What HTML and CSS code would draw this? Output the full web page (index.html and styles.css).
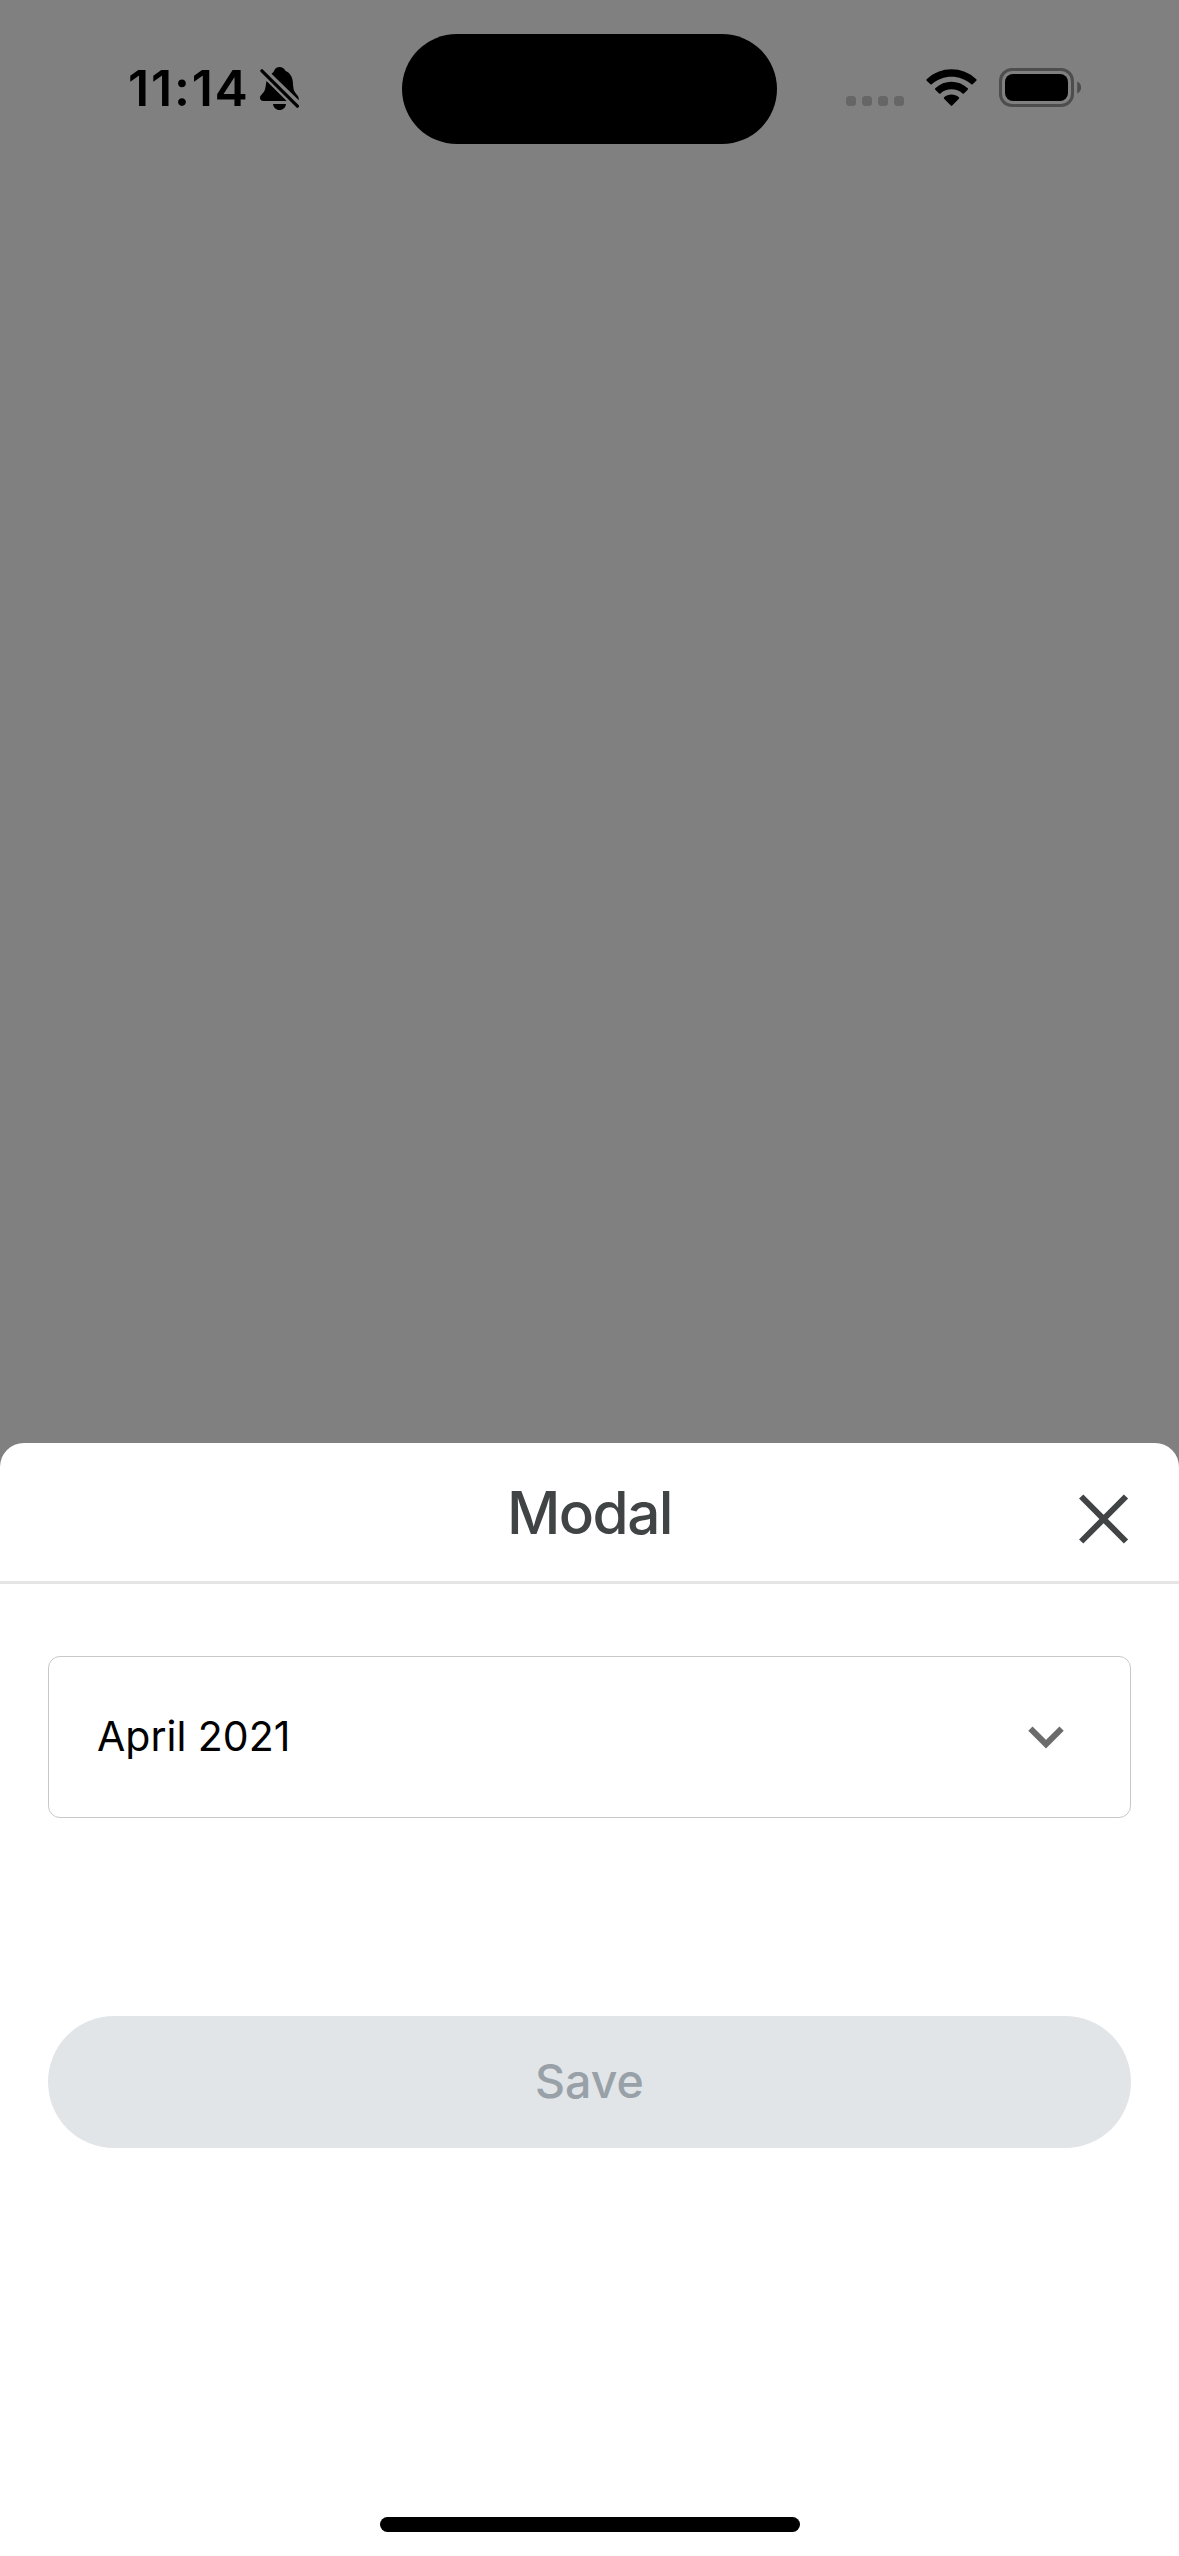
FILE: index.html
```
<!DOCTYPE html>
<html lang="en">
<head>
<meta charset="utf-8">
<title>Modal</title>
<link rel="stylesheet" href="styles.css">
</head>
<body>
<div class="screen">
  <header class="status-bar">
    <div class="status-left">
      <span class="time">11:14</span>
      <svg class="bell" width="40" height="44" viewBox="0 0 40 44" aria-hidden="true">
        <path d="M11.5 6.8C13 5.800 13.600 5 14.200 3.500C15.500 0.800 17.500 0 19.500 0C22 0 24.200 1.200 25.300 3.700C30.500 6 32.700 10.500 32.900 15.500C33.100 20 33.500 23.500 35.500 26C37.500 28.500 39 29.500 38.800 33.300Z"/>
        <path d="M6.500 14.100L26.700 34H3.600C1.500 34 0 33 0 30.800C0 28 3 27 4.600 23.500C5.800 20.500 5.800 17.500 6.500 14.100Z"/>
        <path d="M13 37H26C25.600 40.500 23 43 19.500 43C16 43 13.400 40.500 13 37Z"/>
        <path class="slash" d="M1.900 3.800L37.400 39.200"/>
      </svg>
    </div>
    <div class="island"></div>
    <div class="status-right">
      <div class="signal"><i></i><i></i><i></i><i></i></div>
      <svg class="wifi" width="51" height="38" viewBox="0 0 51 38" aria-hidden="true">
        <path d="M0.700 10.300Q0 11 0.700 11.700L4.400 15.300Q5 15.900 5.700 15.300C17 5.200 34 5.200 45.300 15.300Q46 15.900 46.600 15.300L50.300 11.700Q51 11 50.300 10.300C36.500 -3 14.500 -3 0.700 10.300Z"/>
        <path d="M9.300 19.300Q8.600 20 9.300 20.700L13.100 24.500Q13.700 25.100 14.400 24.500C20.700 18.900 30.300 18.900 36.600 24.500Q37.300 25.100 37.900 24.500L41.700 20.700Q42.400 20 41.700 19.300C32.500 10.700 18.500 10.700 9.300 19.300Z"/>
        <path d="M18.100 28.200Q17.400 29 18.100 29.700L24.800 36.600Q25.500 37.300 26.200 36.600L32.900 29.700Q33.600 29 32.900 28.200C28.700 24.600 22.300 24.600 18.100 28.200Z"/>
      </svg>
      <div class="battery">
        <div class="battery-body"><div class="battery-level"></div></div>
        <svg width="5" height="13" viewBox="0 0 5 13" aria-hidden="true"><path d="M0.200 0.500C5.400 2.300 5.400 10.700 0.200 12.500Z"/></svg>
      </div>
    </div>
  </header>
  <main class="sheet">
    <div class="sheet-header">
      <h1 class="sheet-title">Modal</h1>
      <button class="close" aria-label="Close">
        <svg width="50" height="50" viewBox="0 0 50 50"><path d="M2.200 2.500L47 47.500M47 2.500L2.200 47.500"/></svg>
      </button>
    </div>
    <div class="sheet-body">
      <div class="select">
        <span class="select-value">April 2021</span>
        <svg width="36" height="23" viewBox="0 0 36 23" aria-hidden="true"><path d="M2.400 2.600L18 18.200L33.600 2.600"/></svg>
      </div>
      <button class="save" disabled><span class="save-label">Save</span></button>
    </div>
    <div class="home-indicator"></div>
  </main>
</div>
</body>
</html>
```
FILE: styles.css
```
* {
  box-sizing: border-box;
}

body {
  margin: 0;
  font-family: Inter, "Liberation Sans", sans-serif;
}

button {
  padding: 0;
  border: 0;
  background: none;
  font: inherit;
}

svg {
  display: block;
  flex: none;
}

.screen {
  display: flex;
  flex-direction: column;
  width: 1179px;
  height: 2556px;
  overflow: hidden;
  background: #808080;
}

.status-bar {
  display: grid;
  grid-template-columns: 402px 375px 1fr;
  align-items: start;
  height: 1443px;
  flex: none;
}

.status-left {
  display: flex;
  align-items: flex-start;
  padding: 67px 0 0 128px;
}

.time {
  width: 132px;
  margin-top: -9px;
  font-size: 50px;
  line-height: 60px;
  font-weight: 600;
  letter-spacing: 1.8px;
  white-space: nowrap;
}

.slash {
  fill: none;
  stroke: #000;
  stroke-width: 3.2;
  stroke-linecap: round;
}

.island {
  height: 110px;
  margin-top: 34px;
  border-radius: 55px;
  background: #000;
}

.status-right {
  display: flex;
  align-items: flex-start;
  padding: 68px 0 0 69px;
}

.signal {
  display: flex;
  gap: 6px;
  margin-top: 28px;
}

.signal i {
  width: 10px;
  height: 10px;
  border-radius: 3.5px;
  background: #666;
}

.wifi {
  margin: 1px 0 0 22px;
}

.battery {
  display: flex;
  align-items: center;
  gap: 3px;
  margin-left: 22px;
  fill: #4d4d4d;
}

.battery-body {
  width: 75px;
  height: 39px;
  padding: 3px;
  border: 3px solid #4d4d4d;
  border-radius: 13px;
}

.battery-level {
  height: 27px;
  border-radius: 8px;
  background: #000;
}

.sheet {
  display: flex;
  flex-direction: column;
  flex: 1;
  border-radius: 24px 24px 0 0;
  background: #fff;
}

.sheet-header {
  display: grid;
  grid-template-columns: 1fr auto 1fr;
  height: 141px;
  border-bottom: 3px solid #e5e5e5;
  color: #404444;
}

.sheet-title {
  grid-column: 2;
  margin: 34px 0 0;
  font-size: 58.500px;
  line-height: 72px;
  font-weight: 500;
  letter-spacing: -1.6px;
}

.close {
  justify-self: end;
  align-self: start;
  margin: 51px 50px 0 0;
}

.close path {
  fill: none;
  stroke: #404444;
  stroke-width: 6;
}

.sheet-body {
  flex: 1;
  padding: 72px 48px 0;
}

.select {
  display: flex;
  align-items: center;
  justify-content: space-between;
  height: 162px;
  padding: 0 66px 0 48px;
  border: 1px solid #c8c8c8;
  border-radius: 12px;
}

.select-value {
  margin-bottom: 2px;
  font-size: 41px;
  line-height: 50px;
  color: #000;
}

.select path {
  fill: none;
  stroke: #6b6b6b;
  stroke-width: 6;
}

.save {
  display: block;
  width: 100%;
  height: 132px;
  margin-top: 198px;
  border-radius: 66px;
  background: #e1e5e8;
  color: #99a1a8;
  font-size: 46.500px;
  line-height: 130px;
  font-weight: 500;
}

.save-label {
  display: block;
  height: 132px;
}

.home-indicator {
  width: 420px;
  height: 15px;
  margin: 0 auto 24px;
  border-radius: 8px;
  background: #000;
}
```
